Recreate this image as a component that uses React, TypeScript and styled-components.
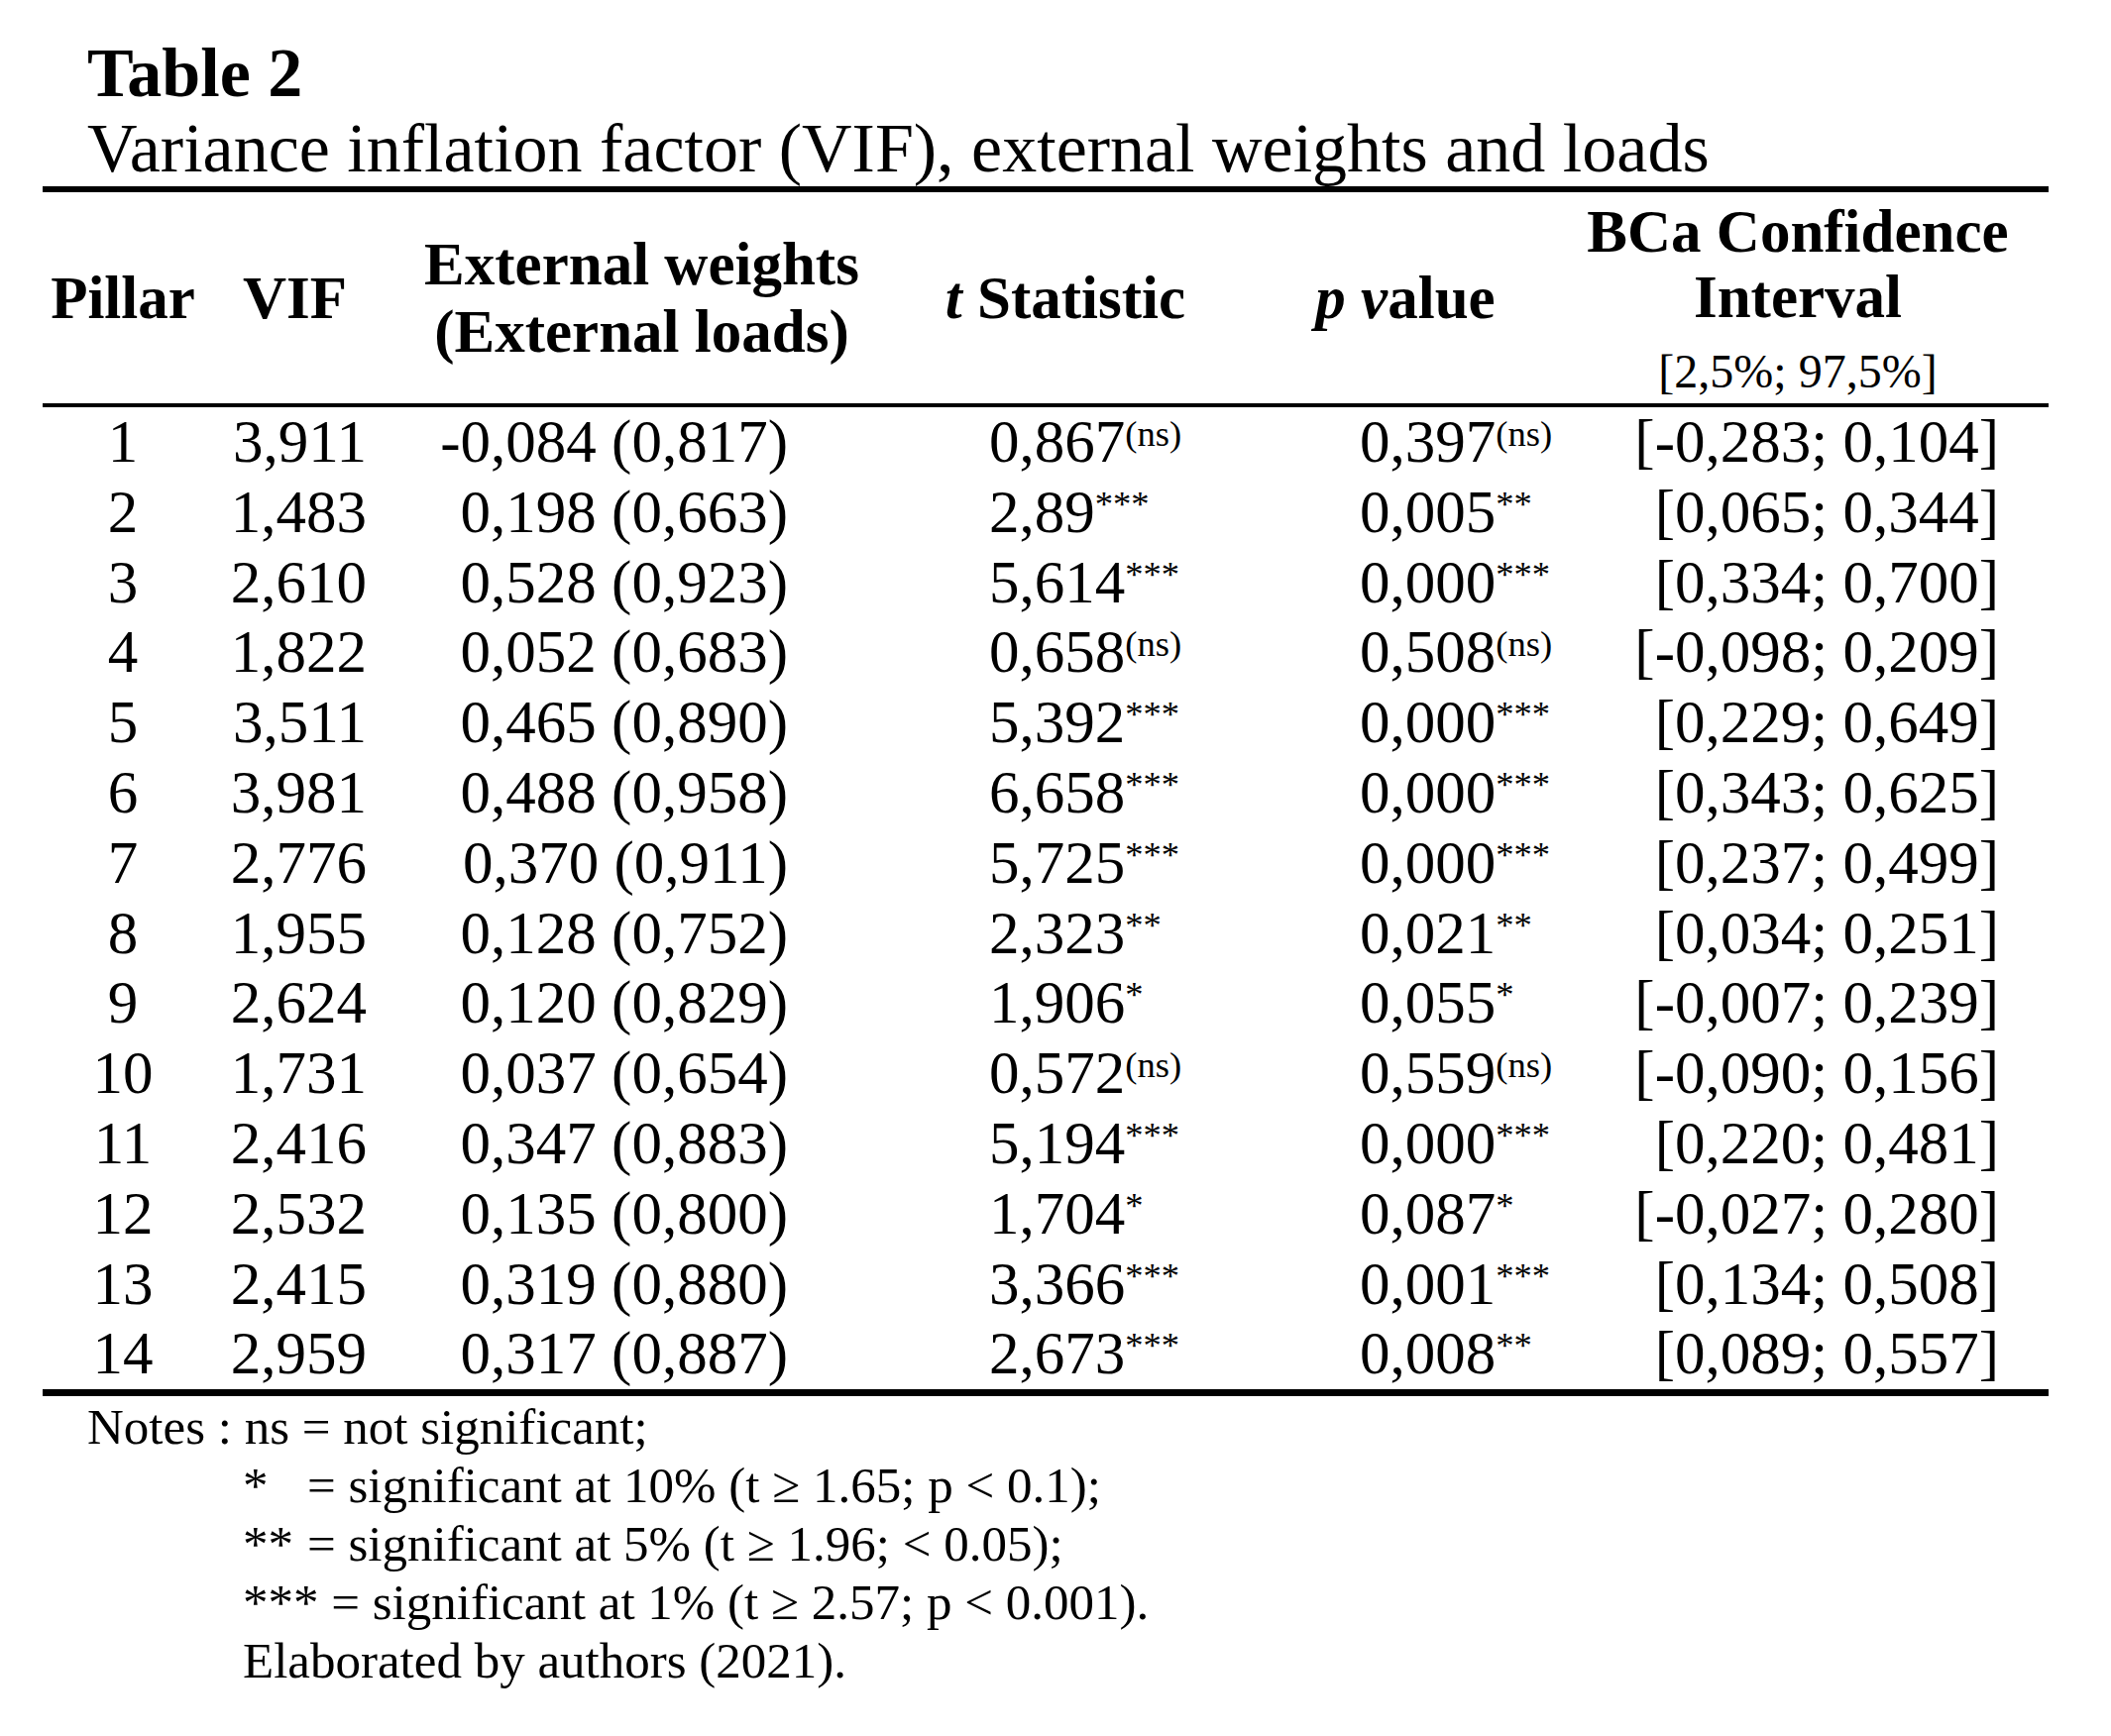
import styled, { createGlobalStyle } from "styled-components";

const GlobalStyle = createGlobalStyle`
  html, body {
    margin: 0;
    padding: 0;
    background: #ffffff;
  }
  body {
    font-family: "Liberation Serif", "Times New Roman", serif;
    color: #000000;
  }
`;

type Align = "left" | "center" | "right";

type Column = {
  width: number;
  align: Align;
  padLeft: number;
  padRight: number;
};

// column widths and value insets, measured on the reference
const columns: Column[] = [
  { width: 162, align: "center", padLeft: 0, padRight: 0 },
  { width: 185, align: "right", padLeft: 0, padRight: 20 },
  { width: 515, align: "right", padLeft: 0, padRight: 110 },
  { width: 340, align: "left", padLeft: 93, padRight: 0 },
  { width: 346, align: "left", padLeft: 127, padRight: 0 },
  { width: 476, align: "right", padLeft: 0, padRight: 50 },
];

// pillar, vif, weight (load), t, t mark, p, p mark, interval
const rows: string[][] = [
  ["1", "3,911", "-0,084 (0,817)", "0,867", "(ns)", "0,397", "(ns)", "[-0,283; 0,104]"],
  ["2", "1,483", "0,198 (0,663)", "2,89", "***", "0,005", "**", "[0,065; 0,344]"],
  ["3", "2,610", "0,528 (0,923)", "5,614", "***", "0,000", "***", "[0,334; 0,700]"],
  ["4", "1,822", "0,052 (0,683)", "0,658", "(ns)", "0,508", "(ns)", "[-0,098; 0,209]"],
  ["5", "3,511", "0,465 (0,890)", "5,392", "***", "0,000", "***", "[0,229; 0,649]"],
  ["6", "3,981", "0,488 (0,958)", "6,658", "***", "0,000", "***", "[0,343; 0,625]"],
  ["7", "2,776", "0,370 (0,911)", "5,725", "***", "0,000", "***", "[0,237; 0,499]"],
  ["8", "1,955", "0,128 (0,752)", "2,323", "**", "0,021", "**", "[0,034; 0,251]"],
  ["9", "2,624", "0,120 (0,829)", "1,906", "*", "0,055", "*", "[-0,007; 0,239]"],
  ["10", "1,731", "0,037 (0,654)", "0,572", "(ns)", "0,559", "(ns)", "[-0,090; 0,156]"],
  ["11", "2,416", "0,347 (0,883)", "5,194", "***", "0,000", "***", "[0,220; 0,481]"],
  ["12", "2,532", "0,135 (0,800)", "1,704", "*", "0,087", "*", "[-0,027; 0,280]"],
  ["13", "2,415", "0,319 (0,880)", "3,366", "***", "0,001", "***", "[0,134; 0,508]"],
  ["14", "2,959", "0,317 (0,887)", "2,673", "***", "0,008", "**", "[0,089; 0,557]"],
];

const App = (): JSX.Element => {
  return (
    <Page>
      <GlobalStyle />
      <Caption>
        <TableLabel>Table 2</TableLabel>
        <Subtitle>Variance inflation factor (VIF), external weights and loads</Subtitle>
      </Caption>

      <Table>
        <HeadCell>Pillar</HeadCell>
        <HeadCell>VIF</HeadCell>
        <HeadCell>
          <HeadLine>External weights</HeadLine>
          <HeadLine>(External loads)</HeadLine>
        </HeadCell>
        <HeadCell>
          <span>
            <i>t</i> Statistic
          </span>
        </HeadCell>
        <HeadCell>
          <span>
            <i>p v</i>alue
          </span>
        </HeadCell>
        <HeadCell $shift={30}>
          <HeadLine $tight>BCa Confidence</HeadLine>
          <HeadLine $tight>Interval</HeadLine>
          <RangeLine>[2,5%; 97,5%]</RangeLine>
        </HeadCell>

        {rows.map((r) => [
          <BodyCell key={r[0] + "a"} $col={columns[0]}>{r[0]}</BodyCell>,
          <BodyCell key={r[0] + "b"} $col={columns[1]}>{r[1]}</BodyCell>,
          <BodyCell key={r[0] + "c"} $col={columns[2]}>{r[2]}</BodyCell>,
          <BodyCell key={r[0] + "d"} $col={columns[3]}>
            {r[3]}
            <Mark>{r[4]}</Mark>
          </BodyCell>,
          <BodyCell key={r[0] + "e"} $col={columns[4]}>
            {r[5]}
            <Mark>{r[6]}</Mark>
          </BodyCell>,
          <BodyCell key={r[0] + "f"} $col={columns[5]}>{r[7]}</BodyCell>,
        ])}
      </Table>

      <Notes>
        <NoteLine>Notes : ns = not significant;</NoteLine>
        <NoteLine $indent>
          <NoteKey $width={65}>*</NoteKey>= significant at 10% (t ≥ 1.65; p &lt; 0.1);
        </NoteLine>
        <NoteLine $indent>
          <NoteKey $width={65}>**</NoteKey>= significant at 5% (t ≥ 1.96; &lt; 0.05);
        </NoteLine>
        <NoteLine $indent>*** = significant at 1% (t ≥ 2.57; p &lt; 0.001).</NoteLine>
        <NoteLine $indent>Elaborated by authors (2021).</NoteLine>
      </Notes>
    </Page>
  );
};

export default App;

const Page = styled.div`
  width: 2130px;
  min-height: 1752px;
  box-sizing: border-box;
  padding: 36px 0 0 43px;
  background: #ffffff;
`;

const Caption = styled.div`
  padding-left: 45px;
`;

const TableLabel = styled.div`
  font-size: 70px;
  line-height: 76px;
  font-weight: 700;
`;

const Subtitle = styled.div`
  font-size: 70px;
  line-height: 76px;
  font-weight: 400;
`;

const Table = styled.div`
  width: 2024px;
  display: grid;
  grid-template-columns: ${columns.map((c) => `${c.width}px`).join(" ")};
  border-top: 6px solid #000;
  border-bottom: 7px solid #000;
`;

const HeadCell = styled.div<{ $shift?: number }>`
  height: 213px;
  border-bottom: 4px solid #000;
  display: flex;
  flex-direction: column;
  align-items: center;
  justify-content: center;
  padding-right: ${(p) => p.$shift ?? 0}px;
  font-size: 61px;
  line-height: 68px;
  font-weight: 700;
  white-space: nowrap;
`;

const HeadLine = styled.div<{ $tight?: boolean }>`
  line-height: ${(p) => (p.$tight ? 66 : 68)}px;
`;

const RangeLine = styled.div`
  margin-top: 17px;
  font-size: 48px;
  line-height: 50px;
  font-weight: 400;
`;

const BodyCell = styled.div<{ $col: Column }>`
  height: 70.8px;
  font-size: 61px;
  line-height: 70.8px;
  text-align: ${(p) => p.$col.align};
  padding-left: ${(p) => p.$col.padLeft}px;
  padding-right: ${(p) => p.$col.padRight}px;
  white-space: nowrap;
`;

const Mark = styled.span`
  font-size: 0.6em;
  line-height: 0;
  vertical-align: 0.43em;
`;

const Notes = styled.div`
  margin-top: 2px;
  padding-left: 45px;
  font-size: 51px;
  line-height: 59px;
`;

const NoteLine = styled.div<{ $indent?: boolean }>`
  padding-left: ${(p) => (p.$indent ? 157 : 0)}px;
  white-space: nowrap;
`;

const NoteKey = styled.span<{ $width: number }>`
  display: inline-block;
  width: ${(p) => p.$width}px;
`;
